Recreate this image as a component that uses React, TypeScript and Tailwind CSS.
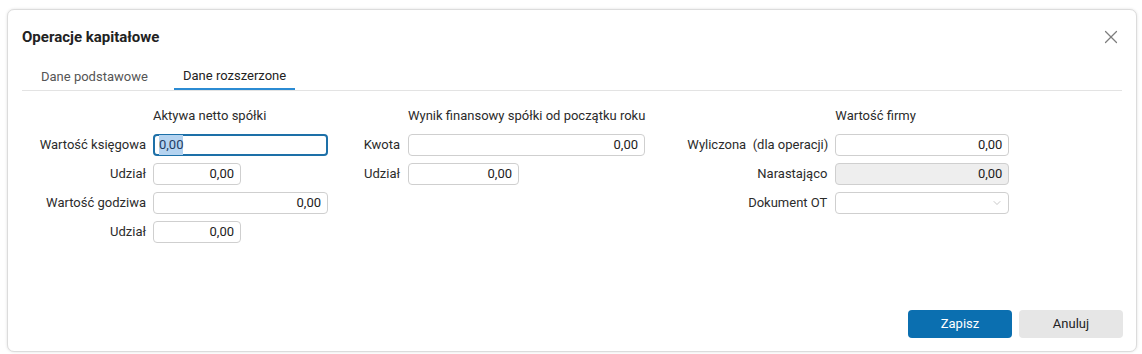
import React from 'react'
import { X, ChevronDown } from 'lucide-react'

const font = { fontFamily: 'Roboto, "Noto Sans", sans-serif' }

function NumInput({ w, value = '0,00', disabled = false }: { w: string; value?: string; disabled?: boolean }) {
  return (
    <div
      className={`${w} h-[22px] rounded-[4px] border border-[#cfcfcf] px-[6px] flex items-center justify-end text-[13px] text-[#222] ${disabled ? 'bg-[#eeeeee]' : 'bg-white'}`}
    >
      {value}
    </div>
  )
}

function Label({ children, w }: { children: React.ReactNode; w: string }) {
  return <div className={`${w} text-right text-[13px] text-[#2b2b2b] whitespace-nowrap`}>{children}</div>
}

export default function App() {
  return (
    <div className="w-[1142px] h-[354px] bg-white pt-[9px] pl-[7px]" style={font}>
      <div className="w-[1130px] h-[343px] rounded-[7px] border border-[#dcdcdc] bg-white shadow-[0_0_3px_rgba(0,0,0,0.12)] flex flex-col">
        {/* Header */}
        <div className="h-[38px] mt-[8px] pl-[14px] pr-[14px] flex items-center justify-between">
          <h2 className="text-[15px] font-bold text-[#222]">Operacje kapitałowe</h2>
          <X size={22} strokeWidth={1.3} className="text-[#7d7d7d]" />
        </div>

        {/* Tabs */}
        <div className="mx-[14px] mt-[7px] flex border-b border-[#e3e3e3]">
          <div className="h-[27px] ml-[19px] w-[124px] text-[13px] text-[#555] flex items-center">Dane podstawowe</div>
          <div className="h-[27px] ml-[9px] px-[9px] text-[13px] text-[#222] flex items-center border-b-2 border-[#2b8bd3]">
            Dane rozszerzone
          </div>
        </div>

        {/* Content */}
        <div className="flex pl-[14px] mt-[16px]">
          {/* Aktywa netto */}
          <div className="flex flex-col">
            <div className="h-[18px] ml-[131px] text-[13px] text-[#2b2b2b] flex items-center">Aktywa netto spółki</div>
            <div className="mt-[9px] flex flex-col gap-[7px]">
              <div className="flex items-center gap-[7px]">
                <Label w="w-[124px]">Wartość księgowa</Label>
                <div className="w-[175px] h-[22px] rounded-[4px] border-2 border-[#1d70a8] px-[4px] flex items-center text-[13px]">
                  <span className="bg-[#b4d3f0] text-[#1e3d66]">0,00</span>
                </div>
              </div>
              <div className="flex items-center gap-[7px]">
                <Label w="w-[124px]">Udział</Label>
                <NumInput w="w-[88px]" />
              </div>
              <div className="flex items-center gap-[7px]">
                <Label w="w-[124px]">Wartość godziwa</Label>
                <NumInput w="w-[175px]" />
              </div>
              <div className="flex items-center gap-[7px]">
                <Label w="w-[124px]">Udział</Label>
                <NumInput w="w-[88px]" />
              </div>
            </div>
          </div>

          {/* Wynik finansowy */}
          <div className="flex flex-col ml-[22px]">
            <div className="h-[18px] ml-[58px] text-[13px] text-[#2b2b2b] flex items-center whitespace-nowrap">
              Wynik finansowy spółki od początku roku
            </div>
            <div className="mt-[9px] flex flex-col gap-[7px]">
              <div className="flex items-center gap-[8px]">
                <Label w="w-[50px]">Kwota</Label>
                <NumInput w="w-[237px]" />
              </div>
              <div className="flex items-center gap-[8px]">
                <Label w="w-[50px]">Udział</Label>
                <NumInput w="w-[111px]" />
              </div>
            </div>
          </div>

          {/* Wartość firmy */}
          <div className="flex flex-col ml-[42px]">
            <div className="h-[18px] ml-[148px] text-[13px] text-[#2b2b2b] flex items-center">Wartość firmy</div>
            <div className="mt-[9px] flex flex-col gap-[7px]">
              <div className="flex items-center gap-[8px]">
                <Label w="w-[140px]">Wyliczona&nbsp; (dla operacji)</Label>
                <NumInput w="w-[174px]" />
              </div>
              <div className="flex items-center gap-[8px]">
                <Label w="w-[140px]">Narastająco</Label>
                <NumInput w="w-[174px]" disabled />
              </div>
              <div className="flex items-center gap-[8px]">
                <Label w="w-[140px]">Dokument OT</Label>
                <div className="w-[174px] h-[22px] rounded-[4px] border border-[#cfcfcf] bg-white flex items-center justify-end pr-[5px]">
                  <ChevronDown size={12} strokeWidth={1.3} className="text-[#aaa]" />
                </div>
              </div>
            </div>
          </div>
        </div>

        {/* Footer */}
        <div className="mt-auto mb-[13px] mr-[13px] flex justify-end gap-[7px]">
          <button className="w-[104px] h-[28px] rounded-[4px] bg-[#0b6fb0] text-white text-[13px]">Zapisz</button>
          <button className="w-[104px] h-[28px] rounded-[4px] bg-[#e6e6e6] text-[#222] text-[13px]">Anuluj</button>
        </div>
      </div>
    </div>
  )
}
